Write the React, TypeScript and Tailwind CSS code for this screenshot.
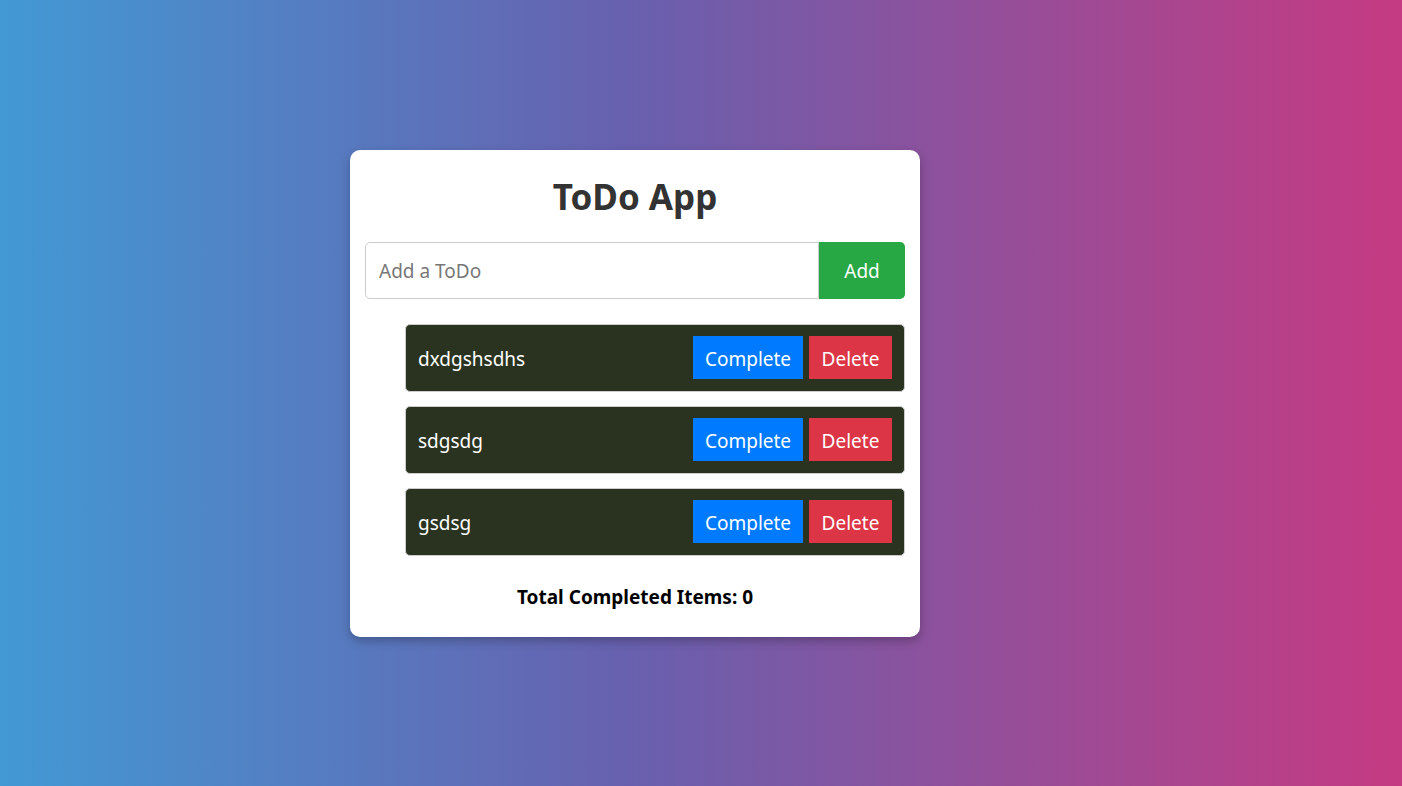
import { useState } from "react";

interface Todo {
  id: number;
  text: string;
  done: boolean;
}

const initial: Todo[] = [
  { id: 1, text: "dxdgshsdhs", done: false },
  { id: 2, text: "sdgsdg", done: false },
  { id: 3, text: "gsdsg", done: false },
];

export default function App() {
  const [todos, setTodos] = useState<Todo[]>(initial);
  const [input, setInput] = useState("");

  const addTodo = () => {
    if (!input.trim()) return;
    setTodos([...todos, { id: Date.now(), text: input.trim(), done: false }]);
    setInput("");
  };

  const completed = todos.filter((t) => t.done).length;

  return (
    <div
      className="flex h-screen w-full items-center justify-center pr-[132px] bg-[linear-gradient(to_right,#4299d4,#6860ae_45%,#c53a82)]"
      style={{ fontFamily: '"Noto Sans", "Open Sans", sans-serif' }}
    >
      <div className="w-[570px] rounded-[10px] bg-white p-[15px] shadow-[0_4px_10px_rgba(0,0,0,0.25)]">
        <h1 className="mt-[10px] mb-[24px] text-center text-[35px] font-bold leading-[43px] text-[#333]">
          ToDo App
        </h1>

        {/* Input row */}
        <div className="flex">
          <input
            value={input}
            onChange={(e) => setInput(e.target.value)}
            placeholder="Add a ToDo"
            className="h-[57px] flex-1 rounded-l-[5px] border border-[#ccc] px-[13px] pt-[2px] text-[19px] text-[#333] outline-none placeholder:text-[#777]"
          />
          <button
            onClick={addTodo}
            className="w-[86px] rounded-r-[5px] bg-[#28a745] pt-[2px] text-[19px] text-white"
          >
            Add
          </button>
        </div>

        {/* Todo list */}
        <ul className="mt-[25px] flex flex-col gap-[14px] pl-[40px]">
          {todos.map((t) => (
            <li
              key={t.id}
              className="flex h-[68px] items-center justify-between rounded-[5px] border border-[#ccc] bg-[#2a3320] px-[12px]"
            >
              <span
                className={`pt-[3px] text-[19px] text-white ${t.done ? "line-through" : ""}`}
              >
                {t.text}
              </span>
              <div className="flex gap-[6px]">
                <button
                  onClick={() =>
                    setTodos(
                      todos.map((x) =>
                        x.id === t.id ? { ...x, done: !x.done } : x
                      )
                    )
                  }
                  className="h-[43px] w-[110px] bg-[#007bff] pt-[3px] text-[19px] text-white"
                >
                  Complete
                </button>
                <button
                  onClick={() => setTodos(todos.filter((x) => x.id !== t.id))}
                  className="h-[43px] w-[83px] bg-[#dc3545] pt-[3px] text-[19px] text-white"
                >
                  Delete
                </button>
              </div>
            </li>
          ))}
        </ul>

        <p className="mt-[28px] mb-[11px] text-center text-[19px] font-bold leading-[27px] text-black">
          Total Completed Items: {completed}
        </p>
      </div>
    </div>
  );
}
